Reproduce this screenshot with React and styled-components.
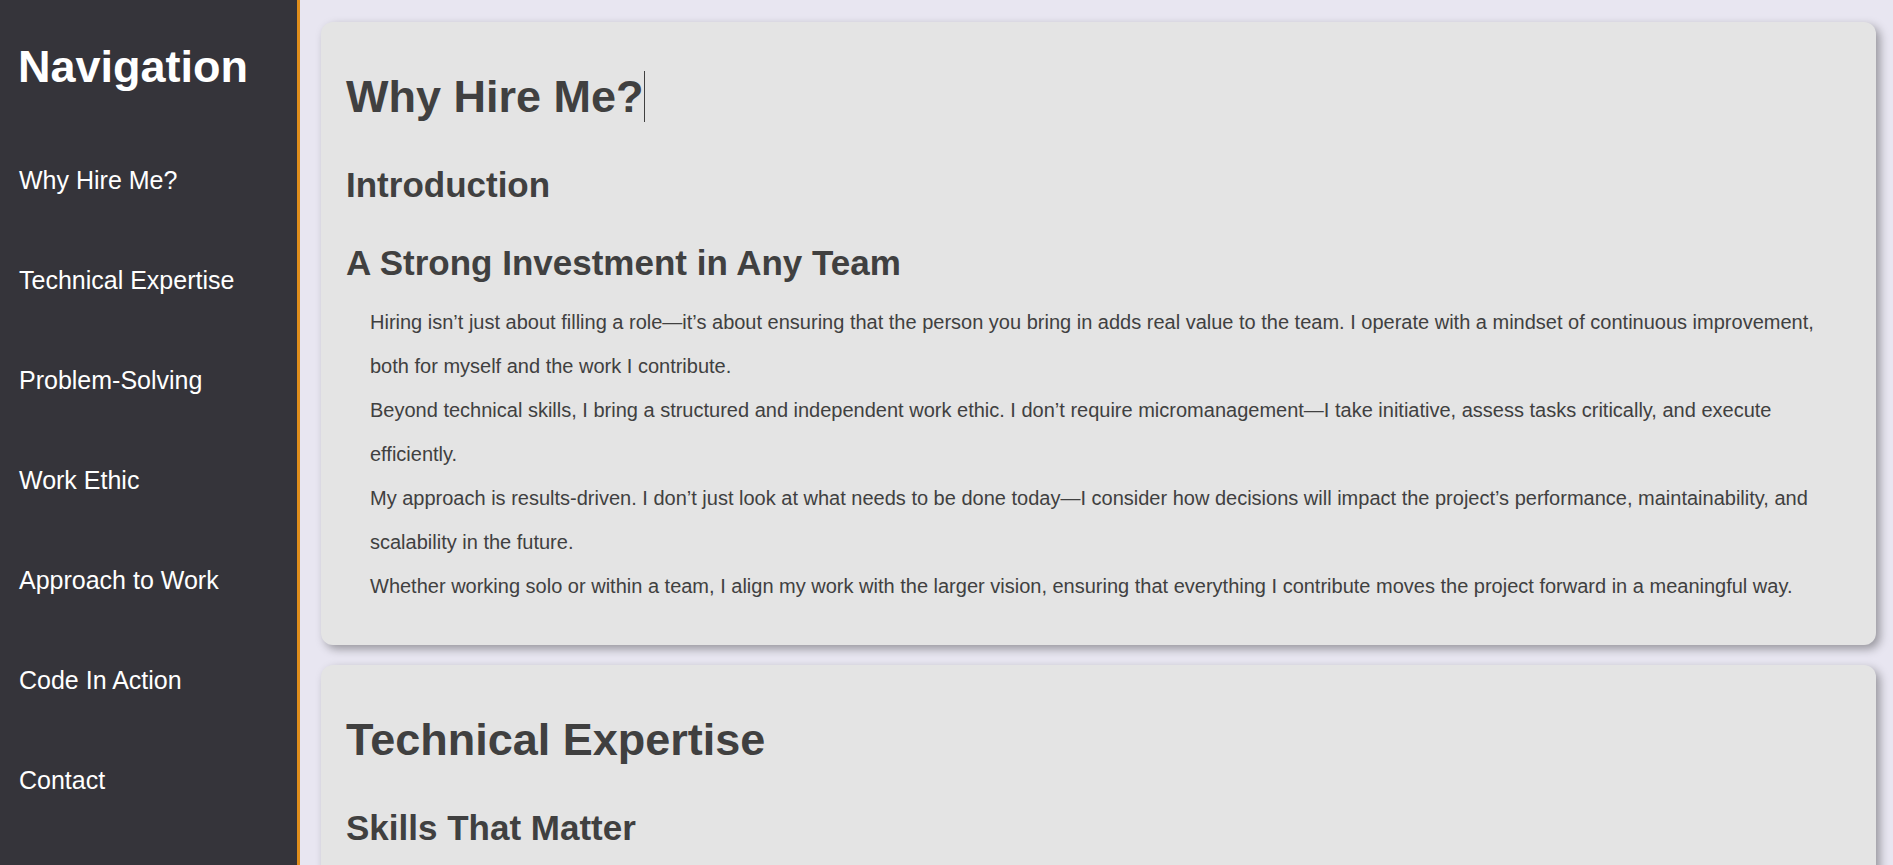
import React from "react"
import styled, { createGlobalStyle } from "styled-components"

const GlobalStyle = createGlobalStyle`
  html, body {
    margin: 0;
    padding: 0;
    background: #e8e6f1;
    font-family: "Liberation Sans", Arial, sans-serif;
  }
  * {
    box-sizing: border-box;
  }
`

const sections = [
  {
    id: "why",
    title: "Why Hire Me?",
    caret: true,
    subtitle: "Introduction",
    heading: "A Strong Investment in Any Team",
    paragraphs: [
      "Hiring isn’t just about filling a role—it’s about ensuring that the person you bring in adds real value to the team. I operate with a mindset of continuous improvement, both for myself and the work I contribute.",
      "Beyond technical skills, I bring a structured and independent work ethic. I don’t require micromanagement—I take initiative, assess tasks critically, and execute efficiently.",
      "My approach is results-driven. I don’t just look at what needs to be done today—I consider how decisions will impact the project’s performance, maintainability, and scalability in the future.",
      "Whether working solo or within a team, I align my work with the larger vision, ensuring that everything I contribute moves the project forward in a meaningful way.",
    ],
  },
  {
    id: "tech",
    title: "Technical Expertise",
    subtitle: "Skills That Matter",
    paragraphs: [],
  },
]

const links = [
  "Why Hire Me?",
  "Technical Expertise",
  "Problem-Solving",
  "Work Ethic",
  "Approach to Work",
  "Code In Action",
  "Contact",
]

const App = () => (
  <>
    <GlobalStyle />
    <Layout>
      <Sidebar>
        <NavTitle>Navigation</NavTitle>
        <NavList>
          {links.map(link => (
            <NavLink key={link} href={`#${link}`}>
              {link}
            </NavLink>
          ))}
        </NavList>
      </Sidebar>
      <Main>
        {sections.map(section => (
          <Card key={section.id} id={section.id}>
            <CardTitle>
              <Typed $caret={section.caret}>{section.title}</Typed>
            </CardTitle>
            <SubTitle>{section.subtitle}</SubTitle>
            {section.heading && <SectionHeading>{section.heading}</SectionHeading>}
            {section.paragraphs.length > 0 && (
              <Body>
                {section.paragraphs.map((p, i) => (
                  <Paragraph key={i}>{p}</Paragraph>
                ))}
              </Body>
            )}
          </Card>
        ))}
      </Main>
    </Layout>
  </>
)

export default App

const Layout = styled.div`
  display: flex;
  height: 100vh;
  overflow: hidden;
`

const Sidebar = styled.nav`
  flex: 0 0 300px;
  background: #35343a;
  border-right: 3px solid #e08e1c;
  padding: 41px 0 0 18px;
`

const NavTitle = styled.h1`
  margin: 0;
  font-size: 45px;
  font-weight: 700;
  line-height: normal;
  color: #ffffff;
`

const NavList = styled.div`
  display: flex;
  flex-direction: column;
  margin-top: 37px;
`

const NavLink = styled.a`
  display: block;
  padding: 36px 0 36px 1px;
  font-size: 25px;
  line-height: 28px;
  color: #ffffff;
  text-decoration: none;
`

const Main = styled.main`
  flex: 1;
  display: flex;
  flex-direction: column;
  gap: 20px;
  padding: 22px 17px 20px 21px;
  overflow: hidden;
`

const Card = styled.section`
  flex-shrink: 0;
  background: #e4e4e4;
  border-radius: 12px;
  box-shadow: 4px 4px 10px rgba(0, 0, 0, 0.35);
  padding: 49px 25px 37px 25px;
  color: #404040;
`

const CardTitle = styled.h1`
  margin: 0 0 42px;
  font-size: 45px;
  font-weight: 700;
  line-height: 52px;
`

const Typed = styled.span`
  border-right: ${props => (props.$caret ? "1px solid #404040" : "none")};
`

const SubTitle = styled.h2`
  margin: 0 0 38px;
  font-size: 35px;
  font-weight: 700;
  line-height: 40px;
`

const SectionHeading = styled.h3`
  margin: 0 0 17px;
  font-size: 35px;
  font-weight: 700;
  line-height: 40px;
`

const Body = styled.div`
  padding-left: 24px;
`

const Paragraph = styled.p`
  margin: 0;
  font-size: 20px;
  line-height: 44px;
`
